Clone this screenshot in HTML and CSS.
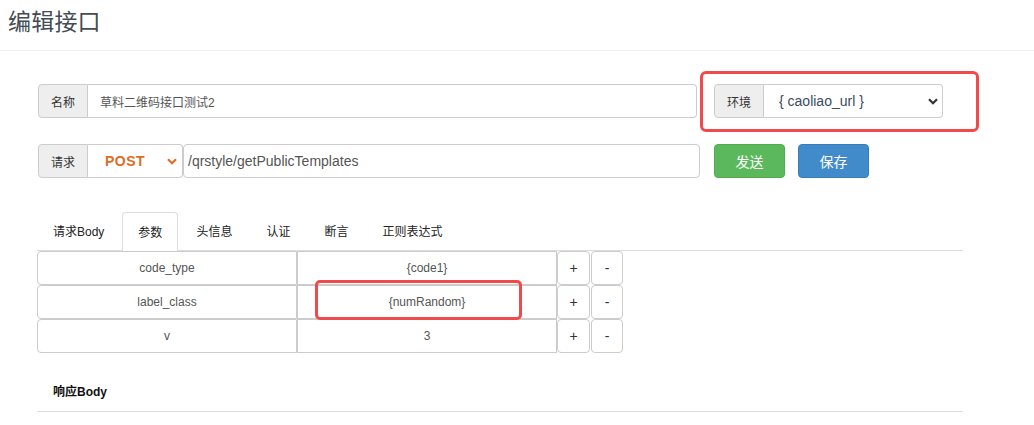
FILE: index.html
```html
<!DOCTYPE html>
<html lang="zh-CN">
<head>
<meta charset="utf-8">
<title>编辑接口</title>
<link rel="stylesheet" href="styles.css">
</head>
<body>
<header class="page-header">
  <h1 class="page-title">编辑接口</h1>
</header>
<main class="content">
  <div class="form-row row-top">
    <div class="input-group name-group">
      <span class="addon">名称</span>
      <div class="field">草料二维码接口测试2</div>
    </div>
    <div class="env-wrap">
      <div class="input-group env-group">
        <span class="addon">环境</span>
        <div class="select env-select">
          <span class="select-text">{ caoliao_url }</span>
          <svg class="chev" width="10" height="7" viewBox="0 0 10 7"><path d="M1 1.2 L5 5.2 L9 1.2" fill="none" stroke="#333" stroke-width="2.2"/></svg>
        </div>
      </div>
    </div>
  </div>
  <div class="form-row row-req">
    <div class="input-group req-group">
      <span class="addon">请求</span>
      <div class="select method-select">
        <span class="method">POST</span>
        <svg class="chev" width="10" height="7" viewBox="0 0 10 7"><path d="M1 1.2 L5 5.2 L9 1.2" fill="none" stroke="#e06c23" stroke-width="2.2"/></svg>
      </div>
      <div class="field url-field">/qrstyle/getPublicTemplates</div>
    </div>
    <div class="actions">
      <button class="btn btn-send">发送</button>
      <button class="btn btn-save">保存</button>
    </div>
  </div>
  <ul class="tabs">
    <li class="tab">请求Body</li>
    <li class="tab active">参数</li>
    <li class="tab">头信息</li>
    <li class="tab">认证</li>
    <li class="tab">断言</li>
    <li class="tab">正则表达式</li>
  </ul>
  <div class="params">
    <div class="param-row">
      <div class="cell">code_type</div>
      <div class="cell">{code1}</div>
      <div class="cell btn-cell">+</div>
      <div class="cell btn-cell minus">-</div>
    </div>
    <div class="param-row">
      <div class="cell">label_class</div>
      <div class="cell marked">{numRandom}</div>
      <div class="cell btn-cell">+</div>
      <div class="cell btn-cell minus">-</div>
    </div>
    <div class="param-row">
      <div class="cell">v</div>
      <div class="cell">3</div>
      <div class="cell btn-cell">+</div>
      <div class="cell btn-cell minus">-</div>
    </div>
  </div>
  <div class="resp">
    <div class="resp-title">响应Body</div>
  </div>
</main>
</body>
</html>
```
FILE: styles.css
```css
* { box-sizing: border-box; }
html, body { margin: 0; padding: 0; background: #fff; }
body {
  font-family: "Liberation Sans", "Noto Sans CJK SC", Arial, sans-serif;
  color: #555;
  font-size: 12px;
}
.page-header {
  height: 51px;
  border-bottom: 1px solid #eee;
  padding: 7px 0 0 8px;
}
.page-title {
  margin: 0;
  font-size: 23px;
  font-weight: normal;
  color: #444b52;
  line-height: 30px;
  letter-spacing: 0.2px;
}
.content { padding: 33px 0 0 38px; }
.form-row { display: flex; align-items: flex-start; }
.row-req { margin-top: 26px; }
.input-group {
  display: flex;
  height: 34px;
}
.addon {
  width: 50px;
  flex: none;
  background: #eee;
  border: 1px solid #ccc;
  border-radius: 4px 0 0 4px;
  display: flex;
  align-items: center;
  justify-content: center;
  font-size: 12px;
  color: #333;
}
.field {
  flex: 1;
  border: 1px solid #ccc;
  border-left: none;
  border-radius: 0 4px 4px 0;
  display: flex;
  align-items: center;
  padding-left: 12px;
  font-size: 12px;
  color: #555;
}
.name-group { width: 659px; }
.env-wrap { position: relative; margin-left: 17px; }
.env-wrap::after {
  content: "";
  position: absolute;
  left: -14px; top: -13px; right: -36px; bottom: -14px;
  border: 3px solid #f04a4a;
  border-radius: 6px;
}
.env-group { width: 229px; }
.select {
  border: 1px solid #ccc;
  border-left: none;
  display: flex;
  align-items: center;
  justify-content: space-between;
}
.env-select {
  flex: 1;
  border-radius: 0 4px 4px 0;
  padding: 0 4px 0 15px;
  font-size: 14px;
  color: #3b4b5e;
}
.method-select {
  width: 95px;
  flex: none;
  border-radius: 0 4px 4px 0;
  padding: 0 5px 0 17px;
}
.method {
  font-size: 14px;
  font-weight: bold;
  color: #e06c23;
  letter-spacing: 0.5px;
}
.chev { display: block; }
.url-field {
  border-left: 1px solid #ccc;
  border-radius: 4px;
  padding-left: 4px;
  font-size: 14px;
  color: #555;
}
.req-group { width: 662px; }
.actions { display: flex; gap: 13px; margin-left: 14px; }
.btn {
  width: 71px;
  height: 34px;
  border-radius: 4px;
  font-family: inherit;
  font-size: 14px;
  color: #fff;
  padding: 0;
  cursor: pointer;
}
.btn-send { background: #5cb85c; border: 1px solid #4cae4c; }
.btn-save { background: #428bca; border: 1px solid #357ebd; }
.tabs {
  list-style: none;
  margin: 34px 0 0 -1px;
  padding: 0;
  display: flex;
  width: 926px;
  border-bottom: 1px solid #ddd;
  height: 39px;
}
.tab {
  height: 39px;
  padding: 0 15px 2px;
  margin-right: 2px;
  display: flex;
  align-items: center;
  font-size: 12px;
  color: #222;
  border: 1px solid transparent;
  border-radius: 4px 4px 0 0;
}
.tab.active {
  border-color: #ddd;
  border-bottom-color: #fff;
  height: 40px;
  background: #fff;
  color: #222;
}
.params { margin-left: -1px; }
.param-row { display: flex; }
.cell {
  height: 34px;
  width: 260px;
  border: 1px solid #ccc;
  border-radius: 4px;
  display: flex;
  align-items: center;
  justify-content: center;
  font-size: 12px;
  color: #555;
}
.cell + .cell { border-radius: 0; }
.cell:first-child { border-radius: 4px 0 0 4px; }
.btn-cell {
  width: 33px;
  font-size: 14px;
  color: #333;
}
.param-row .btn-cell { border-radius: 4px; }
.btn-cell.minus { width: 32px; margin-left: 1px; }
.marked { position: relative; }
.marked::after {
  content: "";
  position: absolute;
  left: 17px; top: -6px; right: 34px; bottom: -2px;
  border: 3px solid #f04a4a;
  border-radius: 5px;
}
.resp {
  margin: 0 0 0 -1px;
  width: 926px;
  padding: 32px 0 12px 16px;
  border-bottom: 1px solid #ddd;
}
.resp-title {
  font-size: 12px;
  font-weight: bold;
  color: #111;
  line-height: 14px;
}
```
